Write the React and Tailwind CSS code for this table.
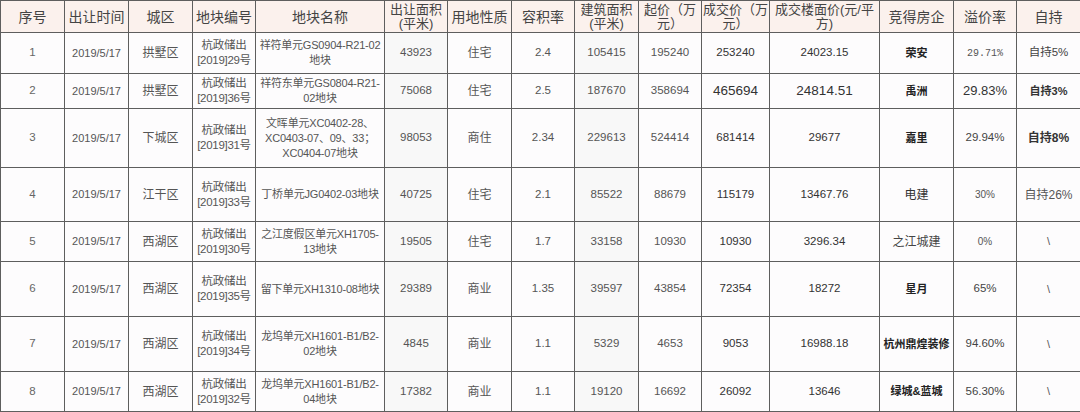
const widths = [64, 64, 64, 63, 129, 63, 64, 63, 64, 63, 68, 110, 74, 63, 64];

const headers = [
  "序号",
  "出让时间",
  "城区",
  "地块编号",
  "地块名称",
  ["出让面积", "(平米)"],
  "用地性质",
  "容积率",
  ["建筑面积", "(平米)"],
  ["起价（万", "元）"],
  ["成交价（万", "元）"],
  ["成交楼面价(元/平", "方)"],
  "竞得房企",
  "溢价率",
  "自持",
];

const rows = [
  {
    h: 41,
    no: "1", area: "拱墅区", code: "[2019]29号",
    name: ["祥符单元GS0904-R21-02", "地块"],
    land: "43923", use: "住宅", far: "2.4", build: "105415", start: "195240",
    deal: "253240", floor: "24023.15", corp: "荣安", prem: "29.71%", self: "自持5%",
    big: false, corpCls: "text-[11px] font-bold text-[#222]",
    premCls: "text-[10px] font-['Liberation_Mono',monospace] text-[#555]",
    selfCls: "text-[11.5px] text-[#444]",
  },
  {
    h: 35,
    no: "2", area: "拱墅区", code: "[2019]36号",
    name: ["祥符东单元GS0804-R21-", "02地块"],
    land: "75068", use: "住宅", far: "2.5", build: "187670", start: "358694",
    deal: "465694", floor: "24814.51", corp: "禹洲", prem: "29.83%", self: "自持3%",
    big: true, corpCls: "text-[11px] font-bold text-[#222]",
    premCls: "text-[13px] text-[#333]",
    selfCls: "text-[11px] font-bold text-[#333]",
  },
  {
    h: 59,
    no: "3", area: "下城区", code: "[2019]31号",
    name: ["文晖单元XC0402-28、", "XC0403-07、09、33；", "XC0404-07地块"],
    land: "98053", use: "商住", far: "2.34", build: "229613", start: "524414",
    deal: "681414", floor: "29677", corp: "嘉里", prem: "29.94%", self: "自持8%",
    big: false, corpCls: "text-[11px] font-bold text-[#222]",
    premCls: "text-[11.5px] text-[#444]",
    selfCls: "text-[12px] font-bold text-[#333]",
  },
  {
    h: 54,
    no: "4", area: "江干区", code: "[2019]33号",
    name: ["丁桥单元JG0402-03地块"],
    land: "40725", use: "住宅", far: "2.1", build: "85522", start: "88679",
    deal: "115179", floor: "13467.76", corp: "电建", prem: "30%", self: "自持26%",
    big: false, corpCls: "text-[12px] text-[#333]",
    premCls: "text-[10px] text-[#555]",
    selfCls: "text-[12px] text-[#555]",
  },
  {
    h: 40,
    no: "5", area: "西湖区", code: "[2019]30号",
    name: ["之江度假区单元XH1705-", "13地块"],
    land: "19505", use: "住宅", far: "1.7", build: "33158", start: "10930",
    deal: "10930", floor: "3296.34", corp: "之江城建", prem: "0%", self: "\\",
    big: false, corpCls: "text-[12px] text-[#444]",
    premCls: "text-[10px] text-[#555]",
    selfCls: "text-[11px] text-[#555]",
  },
  {
    h: 55,
    no: "6", area: "西湖区", code: "[2019]35号",
    name: ["留下单元XH1310-08地块"],
    land: "29389", use: "商业", far: "1.35", build: "39597", start: "43854",
    deal: "72354", floor: "18272", corp: "星月", prem: "65%", self: "\\",
    big: false, corpCls: "text-[11px] font-bold text-[#222]",
    premCls: "text-[11.5px] text-[#444]",
    selfCls: "text-[11px] text-[#555]",
  },
  {
    h: 55,
    no: "7", area: "西湖区", code: "[2019]34号",
    name: ["龙坞单元XH1601-B1/B2-", "02地块"],
    land: "4845", use: "商业", far: "1.1", build: "5329", start: "4653",
    deal: "9053", floor: "16988.18", corp: "杭州鼎煌装修", prem: "94.60%", self: "\\",
    big: false, corpCls: "text-[11px] font-bold text-[#222]",
    premCls: "text-[11.5px] text-[#444]",
    selfCls: "text-[11px] text-[#555]",
  },
  {
    h: 40,
    no: "8", area: "西湖区", code: "[2019]32号",
    name: ["龙坞单元XH1601-B1/B2-", "04地块"],
    land: "17382", use: "商业", far: "1.1", build: "19120", start: "16692",
    deal: "26092", floor: "13646", corp: "绿城&蓝城", prem: "56.30%", self: "\\",
    big: false, corpCls: "text-[11px] font-bold text-[#222]",
    premCls: "text-[11.5px] text-[#444]",
    selfCls: "text-[11px] text-[#555]",
  },
];

const cell = "border border-[#5e5e5e] text-center align-middle p-0 whitespace-nowrap overflow-hidden";

function Lines({ items, cls = "" }) {
  return (
    <div className={`flex flex-col items-center ${cls}`}>
      {items.map((t, i) => (
        <span key={i}>{t}</span>
      ))}
    </div>
  );
}

export default function App() {
  return (
    <div className="w-[1080px] h-[412px] bg-white overflow-hidden font-['Liberation_Sans','Noto_Sans_CJK_SC',sans-serif]">
      <table className="table-fixed border-collapse w-[1080px]">
        <colgroup>
          {widths.map((w, i) => (
            <col key={i} style={{ width: w }} />
          ))}
        </colgroup>
        <thead>
          <tr className="h-[32px] bg-[#fbf1ed]">
            {headers.map((h, i) => (
              <th key={i} className={`${cell} font-normal text-[#444]`}>
                {Array.isArray(h) ? (
                  <Lines items={h} cls="text-[13px] leading-[14px]" />
                ) : (
                  <span className="text-[14px]">{h}</span>
                )}
              </th>
            ))}
          </tr>
        </thead>
        <tbody className="bg-[#fdfcfd] text-[#555]">
          {rows.map((r) => (
            <tr key={r.no} style={{ height: r.h }}>
              <td className={`${cell} text-[11.5px] text-[#666]`}>{r.no}</td>
              <td className={`${cell} text-[11px]`}>2019/5/17</td>
              <td className={`${cell} text-[12px]`}>{r.area}</td>
              <td className={`${cell} text-[11.5px]`}>
                <Lines items={["杭政储出", r.code]} cls="leading-[15px] tracking-[-0.3px]" />
              </td>
              <td className={`${cell} text-[11px]`}>
                <Lines items={r.name} cls="leading-[15px] tracking-[-0.2px]" />
              </td>
              <td className={`${cell} text-[11.5px] bg-[#f8f8f8]`}>{r.land}</td>
              <td className={`${cell} text-[12px]`}>{r.use}</td>
              <td className={`${cell} text-[11.5px]`}>{r.far}</td>
              <td className={`${cell} text-[11.5px] bg-[#f8f8f8]`}>{r.build}</td>
              <td className={`${cell} text-[11.5px]`}>{r.start}</td>
              <td className={`${cell} text-[#333] ${r.big ? "text-[13.5px]" : "text-[11.5px]"}`}>{r.deal}</td>
              <td className={`${cell} text-[#333] ${r.big ? "text-[13.5px]" : "text-[11.5px]"}`}>{r.floor}</td>
              <td className={`${cell} ${r.corpCls}`}>{r.corp}</td>
              <td className={`${cell} ${r.premCls}`}>{r.prem}</td>
              <td className={`${cell} ${r.selfCls}`}>{r.self}</td>
            </tr>
          ))}
        </tbody>
      </table>
    </div>
  );
}
